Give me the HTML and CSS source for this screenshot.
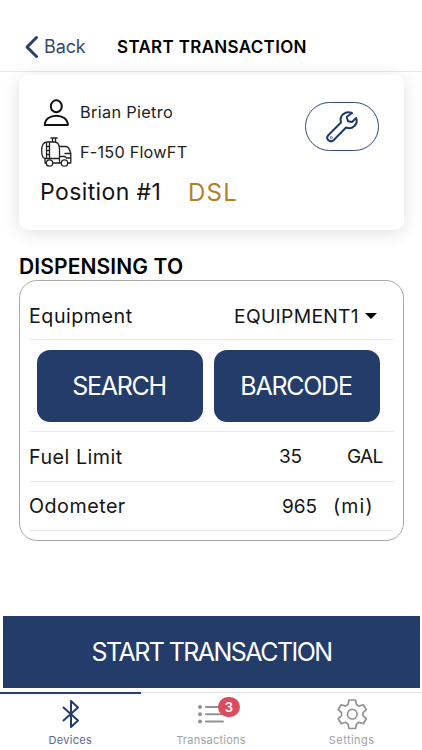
FILE: index.html
```html
<!DOCTYPE html>
<html lang="en">
<head>
<meta charset="utf-8">
<title>Start Transaction</title>
<link rel="stylesheet" href="styles.css">
</head>
<body>
<header class="nav">
  <svg class="chevron" width="16" height="26" viewBox="0 0 16 26"><path d="M13.500 3.500 4 13l9.500 9.500"/></svg>
  <span class="back">Back</span>
  <h1 class="title">START TRANSACTION</h1>
</header>
<main class="content">
  <section class="card">
    <div class="info">
      <div class="line">
        <svg class="icon" width="32" height="30" viewBox="0 0 32 30"><g class="person"><ellipse cx="16.300" cy="8.300" rx="5.500" ry="6"/><path d="M4.800 27c0-12.500 23-12.500 23 0Z"/></g></svg>
        <span class="user">Brian Pietro</span>
      </div>
      <div class="line truck-line">
        <svg class="icon" width="32" height="32" viewBox="0 0 32 32"><g class="truck"><path d="M6.300 27H5v-4.500C2 22 1.700 19 1.700 14.500 1.700 9 3.500 6 7.500 6h7c4 0 5 3 5 8v8.500H5M19.500 10.500H26q3 0 4.800 7V27h-3.100M12.700 27h8.600M19.500 22.500V27M19.500 20.500h5.500l1.500 1.500h4.300M24.500 17.500h6.300M6.500 6v16.500M9.500 6v16.500M6.500 10.500h3M6.500 14.500h3M6.500 18.500h3M10.500 2h7M12.500 2v4M15.500 2v4"/><circle cx="9.500" cy="27" r="3.200"/><circle cx="24.500" cy="27" r="3.200"/></g></svg>
        <span class="vehicle">F-150 FlowFT</span>
      </div>
      <div class="position"><span class="pos">Position #1</span><span class="fuel">DSL</span></div>
    </div>
    <button class="tool" aria-label="Service">
      <svg width="36" height="36" viewBox="0 0 36 36"><path d="M28 4C21 1.500 15 6.500 17 13.500L4.500 26c-3.500 4 1.500 8.500 5.300 5L22 18.500C28.500 21 34.500 15 32.200 9L28 13l-4-.8-1.300-4.200Z"/><circle cx="7.200" cy="28.500" r=".3"/></svg>
    </button>
  </section>
  <h2 class="heading">DISPENSING TO</h2>
  <section class="panel">
    <div class="row equipment"><span class="label">Equipment</span><span class="choice">EQUIPMENT1</span><i class="caret"></i></div>
    <div class="actions"><button class="search">SEARCH</button><button class="barcode">BARCODE</button></div>
    <div class="row limit"><span class="label">Fuel Limit</span><span class="amount">35</span><span class="unit">GAL</span></div>
    <div class="row odo"><span class="label">Odometer</span><span class="miles">965</span><span class="mi">(mi)</span></div>
  </section>
</main>
<button class="start">START TRANSACTION</button>
<nav class="tabs">
  <div class="tab active">
    <svg width="32" height="32" viewBox="0 0 32 32"><path class="bt" d="m9.500 9.500 14.500 13-7 6.500V3l7 6.500-14.500 13"/></svg>
    <span class="t1">Devices</span>
  </div>
  <div class="tab">
    <div class="list-icon">
      <svg width="32" height="32" viewBox="0 0 32 32"><path class="list" d="M11 9h17M11 16.200h17M11 23.400h17"/><g class="dots"><circle cx="5" cy="9" r="2"/><circle cx="5" cy="16.200" r="2"/><circle cx="5" cy="23.400" r="2"/></g></svg>
      <span class="badge">3</span>
    </div>
    <span class="t2">Transactions</span>
  </div>
  <div class="tab">
    <svg width="32" height="32" viewBox="0 0 32 32"><path class="gear" d="M13 2h6.500l1 4.500 2.500 1.600 4.300-1.400 3 5-3.300 3v3l3.300 3-3 5-4.300-1.400-2.500 1.700-1 4.500H13l-1-4.500-2.500-1.700-4.300 1.400-3-5 3.300-3v-3l-3.300-3 3-5 4.300 1.400L12 6.500Z"/><circle class="gear" cx="16.300" cy="16.200" r="4.800"/></svg>
    <span class="t3">Settings</span>
  </div>
</nav>
</body>
</html>
```
FILE: styles.css
```css
* { box-sizing: border-box; }
body {
  margin: 0;
  width: 422px;
  height: 750px;
  display: flex;
  flex-direction: column;
  overflow: hidden;
  background: #fff;
  color: #151515;
  font-family: Inter, "Liberation Sans", sans-serif;
}
button { font: inherit; border: 0; padding: 0; }
h1, h2 { margin: 0; }
span, h1, h2 { white-space: nowrap; }
svg { display: block; fill: none; flex: none; }
.nav {
  height: 72px;
  flex: none;
  padding: 22px 0 0 23px;
  display: flex;
  align-items: center;
  border-bottom: 1px solid #e9e9e9;
}
.chevron { stroke: #263f6d; stroke-width: 3; stroke-linecap: round; stroke-linejoin: round; }
.back { width: 78px; padding-left: 5px; font-size: 18px; color: #35496f; letter-spacing: -.1px; }
.title { font-size: 17px; font-weight: 600; color: #000; letter-spacing: .32px; }
.content { height: 544px; flex: none; padding: 3px 18px 0 19px; }
.card {
  height: 155px;
  display: flex;
  justify-content: space-between;
  padding: 22px 25px 0 21px;
  border-radius: 9px;
  box-shadow: 0 3px 18px rgba(0, 0, 0, .12);
  background: #fff;
}
.line { height: 32px; display: flex; align-items: center; gap: 8px; font-size: 16.3px; font-weight: 370; color: #222; letter-spacing: .2px; }
.user { margin-top: -2px; letter-spacing: .33px; }
.truck-line { margin-top: 7px; }
.person { stroke: #111; stroke-width: 2; stroke-linejoin: round; }
.truck { stroke: #222; stroke-width: 1.3; stroke-linejoin: round; }
.position { height: 36px; margin-top: 6px; display: flex; align-items: center; font-size: 23px; font-weight: 370; }
.pos { width: 148px; letter-spacing: .4px; }
.fuel { color: #b27e2c; font-weight: 400; font-size: 24px; letter-spacing: 1.3px; }
.tool {
  width: 74px;
  height: 49px;
  margin-top: 5px;
  display: flex;
  align-items: center;
  justify-content: center;
  border: 1px solid #35496f;
  border-radius: 25px;
  background: #fff;
}
.tool svg { stroke: #213967; stroke-width: 2; stroke-linejoin: round; }
.heading { height: 50px; padding: 24px 0 0 0; font-size: 21px; line-height: 26px; font-weight: 600; color: #000; letter-spacing: .12px; }
.panel { height: 261px; padding: 0 9px; border: 1px solid #aaa; border-radius: 18px; }
.row { display: flex; align-items: center; font-size: 19px; border-bottom: 1px solid #e9eaeb; }
.equipment { height: 59px; padding-top: 11px; }
.label { width: 205px; font-size: 19.7px; font-weight: 370; letter-spacing: .5px; }
.choice { font-size: 19.3px; font-weight: 370; letter-spacing: .3px; }
.caret { margin-left: 6px; border: solid transparent; border-width: 6px 6px 0; border-top-color: #000; }
.actions { height: 92px; padding: 10px 0 0 8px; display: flex; gap: 11px; border-bottom: 1px solid #e9eaeb; }
.actions button { width: 166px; height: 72px; padding-right: 2px; border-radius: 13px; background: #243c69; color: #fff; font-size: 25px; letter-spacing: -1.25px; }
.limit { height: 50px; }
.amount { width: 68px; margin-left: 45px; letter-spacing: -.3px; }
.unit { letter-spacing: -.7px; }
.odo { height: 49px; }
.miles { width: 51px; margin-left: 48px; }
.mi { font-size: 19.5px; font-weight: 370; letter-spacing: 1.2px; }
.start { width: 417px; height: 72px; flex: none; margin-left: 3px; background: #243c69; color: #fff; font-size: 25px; letter-spacing: -1.55px; }
.tabs { height: 58px; margin-top: 4px; display: grid; grid-template-columns: repeat(3, 1fr); color: #a3a3a6; font-size: 11px; letter-spacing: .25px; }
.tab { display: flex; flex-direction: column; align-items: center; padding-top: 5px; border-top: 1px solid #e5e5e5; }
.tab.active { border-top: 2px solid #263f6d; padding-top: 4px; color: #59678b; }
.tab > span { margin-top: 3px; line-height: 15px; }
.t1 { letter-spacing: .3px; }
.t3 { letter-spacing: .45px; }
.bt { stroke: #243c69; stroke-width: 2; stroke-linejoin: round; stroke-linecap: round; }
.list { stroke: #929292; stroke-width: 2; stroke-linecap: round; }
.dots { fill: #929292; }
.gear { stroke: #929292; stroke-width: 1.7; stroke-linejoin: round; }
.list-icon { position: relative; }
.badge {
  position: absolute;
  left: 23px;
  top: -1px;
  width: 22px;
  height: 20px;
  border-radius: 10px;
  background: #d94c5d;
  color: #fff;
  font-size: 13px;
  font-weight: 600;
  line-height: 20px;
  text-align: center;
}
```
